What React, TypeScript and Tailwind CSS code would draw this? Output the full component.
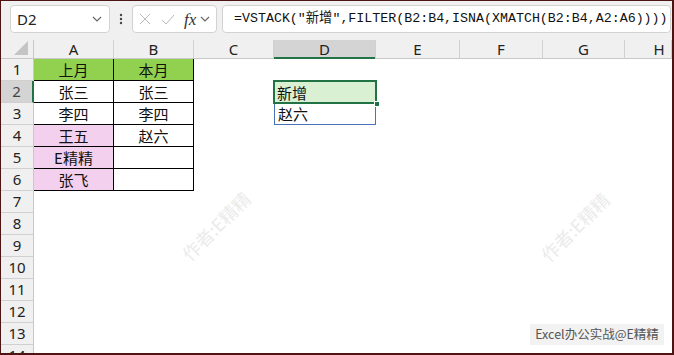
import React from "react";

const colW = ["A", "B", "C", "D", "E", "F", "G", "H"];

type Cell = { text?: string; bg?: string; table?: boolean };

const tableData: Record<string, Cell> = {
  A1: { text: "上月", bg: "bg-[#92d050]", table: true },
  B1: { text: "本月", bg: "bg-[#92d050]", table: true },
  A2: { text: "张三", table: true },
  B2: { text: "张三", table: true },
  A3: { text: "李四", table: true },
  B3: { text: "李四", table: true },
  A4: { text: "王五", bg: "bg-[#f2d0ee]", table: true },
  B4: { text: "赵六", table: true },
  A5: { text: "E精精", bg: "bg-[#f2d0ee]", table: true },
  B5: { table: true },
  A6: { text: "张飞", bg: "bg-[#f2d0ee]", table: true },
  B6: { table: true },
};

const cjk = { fontFamily: '"Noto Sans CJK SC", "Noto Sans", sans-serif' };
const ui = { fontFamily: '"Noto Sans", "Open Sans", sans-serif' };

function Chevron() {
  return (
    <svg width="10" height="6" viewBox="0 0 10 6" fill="none">
      <path d="M1 1l4 4 4-4" stroke="#666" strokeWidth="1.2" />
    </svg>
  );
}

export default function App() {
  const rows = Array.from({ length: 14 }, (_, i) => i + 1);
  return (
    <div className="relative w-[674px] h-[355px] overflow-hidden bg-white border-l border-t border-r-2 border-b-2 border-[#4d1414] flex flex-col">
      {/* toolbar */}
      <div className="h-[39px] shrink-0 bg-[#f0f0f0] flex items-start pt-[4px]">
        <div className="ml-[9px] w-[100px] h-[28px] bg-white border border-[#d2d2d2] rounded-[4px] flex items-center justify-between pl-[6px] pr-[7px]">
          <span className="text-[15px] text-[#222] leading-none" style={ui}>D2</span>
          <Chevron />
        </div>
        <div className="w-[22px] h-[28px] flex items-center justify-center">
          <svg width="4" height="12" viewBox="0 0 4 12">
            <circle cx="2" cy="2" r="1.2" fill="#444" />
            <circle cx="2" cy="6" r="1.2" fill="#444" />
            <circle cx="2" cy="10" r="1.2" fill="#444" />
          </svg>
        </div>
        <div className="w-[85px] h-[28px] bg-white border border-[#d2d2d2] rounded-[4px] flex items-center pl-[6px]">
          <svg width="12" height="12" viewBox="0 0 12 12" className="mr-[10px]">
            <path d="M1 1l10 10M11 1L1 11" stroke="#b8b8b8" strokeWidth="1" />
          </svg>
          <svg width="14" height="11" viewBox="0 0 14 11" className="mr-[9px]">
            <path d="M1 6l4 4 8-9" stroke="#b8b8b8" strokeWidth="1" fill="none" />
          </svg>
          <span className="italic text-[17px] text-[#333] leading-none mr-[4px]" style={{ fontFamily: '"Liberation Serif", serif' }}>
            fx
          </span>
          <Chevron />
        </div>
        <div className="ml-[5px] w-[449px] h-[28px] bg-white border border-[#d2d2d2] rounded-[4px] flex items-center pl-[11px] overflow-hidden whitespace-nowrap">
          <span className="text-[13.3px] text-[#111] leading-none" style={{ fontFamily: '"Liberation Mono", "Noto Sans CJK SC", monospace' }}>
            =VSTACK("新增",FILTER(B2:B4,ISNA(XMATCH(B2:B4,A2:A6))))
          </span>
        </div>
      </div>

      {/* grid */}
      <div className="flex-1 overflow-hidden">
        <div className="grid grid-cols-[33px_80px_80px_80px_102px_84px_83px_82px_1fr] grid-rows-[19px_repeat(14,22px)]">
          {/* corner */}
          <div className="bg-[#f0f0f0] border-r border-b border-[#c8c8c8] relative">
            <svg width="14" height="14" viewBox="0 0 14 14" className="absolute right-[5px] bottom-[3px]">
              <path d="M14 0V14H0Z" fill="#c4c4c4" />
            </svg>
          </div>
          {colW.map((c) => (
            <div
              key={c}
              className={`flex items-center justify-center text-[15px] leading-none text-[#222] border-r border-[#d0d0d0] ${
                c === "D" ? "bg-[#d4d4d4] shadow-[inset_0_-2px_0_#217346]" : "bg-[#f0f0f0] border-b border-b-[#c8c8c8]"
              }`}
              style={ui}
            >
              <span className={c === "H" ? "ml-[22px]" : ""}>{c}</span>
            </div>
          ))}
          {rows.map((r) => (
            <React.Fragment key={r}>
              <div
                className={`flex items-center justify-center text-[15px] leading-none border-b border-[#d0d0d0] ${
                  r === 2 ? "bg-[#d4d4d4] text-[#444] border-r-2 border-r-[#217346]" : "bg-[#f0f0f0] text-[#222] border-r border-r-[#c8c8c8]"
                }`}
                style={ui}
              >
                {r}
              </div>
              {colW.map((c) => {
                const key = c + r;
                const cell = tableData[key];
                if (cell) {
                  return (
                    <div
                      key={key}
                      className={`flex items-center justify-center text-[15px] leading-none text-[#111] border-r border-b border-black ${cell.bg ?? "bg-white"}`}
                      style={cjk}
                    >
                      {cell.text}
                    </div>
                  );
                }
                if (key === "D2") {
                  return (
                    <div key={key} className="relative bg-[#d9f1d2] flex items-center pl-[3px] text-[15px] leading-none text-[#111]" style={cjk}>
                      新增
                      <div className="absolute -left-[1px] -top-[1px] -right-[1px] -bottom-[1px] border-2 border-[#217346]" />
                      <div className="absolute -right-[4px] -bottom-[4px] w-[6px] h-[6px] bg-[#217346] border border-white" />
                    </div>
                  );
                }
                if (key === "D3") {
                  return (
                    <div key={key} className="bg-white flex items-center pl-[3px] text-[15px] leading-none text-[#111] border-l border-r border-b border-[#4a72b8]" style={cjk}>
                      赵六
                    </div>
                  );
                }
                return <div key={key} className="bg-white" />;
              })}
            </React.Fragment>
          ))}
        </div>
      </div>

      {/* watermarks */}
      <div
        className="absolute left-[215px] top-[225px] -translate-x-1/2 -translate-y-1/2 -rotate-45 text-[18px] text-[#ebebeb] whitespace-nowrap pointer-events-none"
        style={cjk}
      >
        作者:E精精
      </div>
      <div
        className="absolute left-[574px] top-[226px] -translate-x-1/2 -translate-y-1/2 -rotate-45 text-[18px] text-[#ebebeb] whitespace-nowrap pointer-events-none"
        style={cjk}
      >
        作者:E精精
      </div>

      {/* badge */}
      <div
        className="absolute left-[529px] top-[323px] w-[134px] h-[21px] bg-[#f2f2f2] flex items-center justify-center text-[12.5px] text-[#555] whitespace-nowrap"
        style={cjk}
      >
        Excel办公实战@E精精
      </div>
    </div>
  );
}
